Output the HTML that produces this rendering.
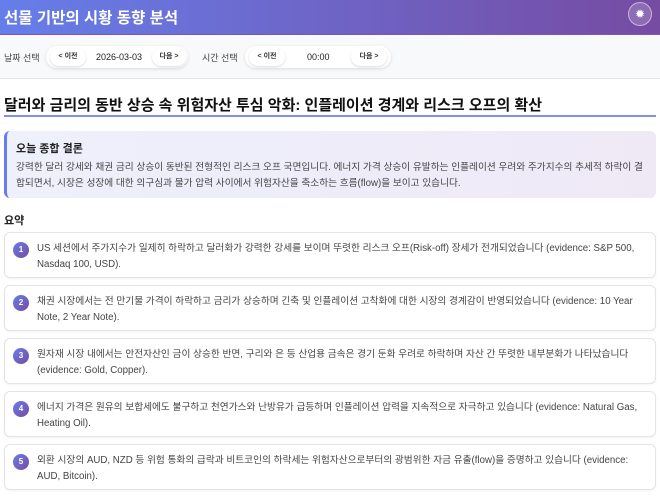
<!DOCTYPE html>
<html><head><meta charset="utf-8"><style>
*{margin:0;padding:0;box-sizing:border-box}
body{width:660px;height:496px;overflow:hidden;background:#fff;font-family:"Liberation Sans","Noto Sans CJK KR",sans-serif;color:#222}
.hd{height:35px;background:linear-gradient(90deg,#667eea,#764ba2);position:relative;border-bottom:1px solid #7a55c0}
.hd h1{position:absolute;left:4px;top:6px;font-size:15.5px;color:#fff;font-weight:bold}
.sun{position:absolute;right:8px;top:2px;width:24px;height:24px;border-radius:50%;background:rgba(255,255,255,.18);border:1px solid rgba(255,255,255,.5);color:#fff;font-size:12px;text-align:center;line-height:22px}
.ctl{height:44px;background:#f8f9fa;border-bottom:1px solid #e6e6e6;position:relative;font-size:9px;color:#444}
.lbl{position:absolute;top:16px}
.grp{position:absolute;top:11px;height:22px;border-radius:11px;background:#fff;box-shadow:0 1px 3px rgba(0,0,0,.12)}
.btn{position:absolute;top:2px;height:18px;border-radius:9px;background:#fff;box-shadow:0 1px 2px rgba(0,0,0,.15);font-size:7px;line-height:18px;text-align:center;font-weight:bold;color:#333}
.val{position:absolute;top:6px;font-size:9px;color:#222}
h2{position:absolute;left:4px;top:94px;width:652px;font-size:15px;font-weight:bold;color:#111;border-bottom:2px solid #7d8ff0;padding-bottom:4px;height:23px}
.sum{position:absolute;left:4px;top:131px;width:652px;height:67px;border-radius:6px;border-left:3px solid #667eea;background:linear-gradient(90deg,#eef0fc,#efe9f6)}
.sum b{position:absolute;left:9px;top:9px;font-size:11px}
.sum p{position:absolute;left:9px;top:29px;width:635px;font-size:9.7px;line-height:16px;color:#444}
.yo{position:absolute;left:4px;top:212px;font-size:11px;font-weight:bold}
.it{position:absolute;left:4px;width:652px;height:46px;border:1px solid #e4e4e4;border-radius:6px;background:#fff;box-shadow:0 1px 2px rgba(0,0,0,.05)}
.n{position:absolute;left:8px;top:9px;width:16px;height:16px;border-radius:50%;background:linear-gradient(135deg,#667eea,#764ba2);color:#fff;font-size:8px;font-weight:bold;text-align:center;line-height:16px}
.it p{position:absolute;left:32px;top:8px;width:612px;font-size:9.7px;line-height:16px;color:#444}
</style></head><body>
<div class="hd"><h1>선물 기반의 시황 동향 분석</h1><div class="sun">✹</div></div>
<div class="ctl">
<span class="lbl" style="left:4px">날짜 선택</span>
<div class="grp" style="left:46px;width:142px"><div class="btn" style="left:4px;width:36px">&lt; 이전</div><span class="val" style="left:50px">2026-03-03</span><div class="btn" style="left:106px;width:34px">다음 &gt;</div></div>
<span class="lbl" style="left:202px">시간 선택</span>
<div class="grp" style="left:245px;width:146px"><div class="btn" style="left:4px;width:36px">&lt; 이전</div><span class="val" style="left:62px">00:00</span><div class="btn" style="left:106px;width:36px">다음 &gt;</div></div>
</div>
<h2>달러와 금리의 동반 상승 속 위험자산 투심 악화: 인플레이션 경계와 리스크 오프의 확산</h2>
<div class="sum"><b>오늘 종합 결론</b><p>강력한 달러 강세와 채권 금리 상승이 동반된 전형적인 리스크 오프 국면입니다. 에너지 가격 상승이 유발하는 인플레이션 우려와 주가지수의 추세적 하락이 결합되면서, 시장은 성장에 대한 의구심과 물가 압력 사이에서 위험자산을 축소하는 흐름(flow)을 보이고 있습니다.</p></div>
<div class="yo">요약</div>
<div class="it" style="top:232px"><div class="n">1</div><p>US 세션에서 주가지수가 일제히 하락하고 달러화가 강력한 강세를 보이며 뚜렷한 리스크 오프(Risk-off) 장세가 전개되었습니다 (evidence: S&amp;P 500, Nasdaq 100, USD).</p></div>
<div class="it" style="top:285px"><div class="n">2</div><p>채권 시장에서는 전 만기물 가격이 하락하고 금리가 상승하며 긴축 및 인플레이션 고착화에 대한 시장의 경계감이 반영되었습니다 (evidence: 10 Year Note, 2 Year Note).</p></div>
<div class="it" style="top:338px"><div class="n">3</div><p>원자재 시장 내에서는 안전자산인 금이 상승한 반면, 구리와 은 등 산업용 금속은 경기 둔화 우려로 하락하며 자산 간 뚜렷한 내부분화가 나타났습니다 (evidence: Gold, Copper).</p></div>
<div class="it" style="top:391px"><div class="n">4</div><p>에너지 가격은 원유의 보합세에도 불구하고 천연가스와 난방유가 급등하며 인플레이션 압력을 지속적으로 자극하고 있습니다 (evidence: Natural Gas, Heating Oil).</p></div>
<div class="it" style="top:444px"><div class="n">5</div><p>외환 시장의 AUD, NZD 등 위험 통화의 급락과 비트코인의 하락세는 위험자산으로부터의 광범위한 자금 유출(flow)을 증명하고 있습니다 (evidence: AUD, Bitcoin).</p></div>
</body></html>
